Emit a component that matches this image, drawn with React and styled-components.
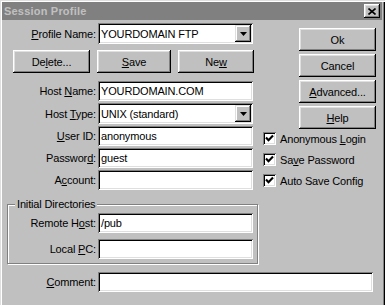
import React from "react";
import styled, { createGlobalStyle } from "styled-components";

const GlobalStyle = createGlobalStyle`
  body {
    margin: 0;
    background: #c0c0c0;
  }
`;

// Outer dialog frame
const Window = styled.div`
  width: 385px;
  height: 305px;
  box-sizing: border-box;
  padding: 2px 3px 0 2px;
  background: #c0c0c0;
  box-shadow: inset 1px 1px #dfdfdf, inset 2px 2px #fff, inset -1px 0 #000,
    inset -2px 0 #808080;
  font-family: "Liberation Sans", Arial, sans-serif;
  font-size: 11px;
  letter-spacing: -0.15px;
  color: #000;
  overflow: hidden;
`;

const TitleBar = styled.div`
  height: 18px;
  background: #808080;
  display: flex;
  align-items: center;
  justify-content: space-between;
  padding: 0 2px;
`;

const Title = styled.span`
  font-weight: bold;
  color: #c0c0c0;
  font-size: 11px;
  letter-spacing: 0.2px;
`;

const CloseButton = styled.div`
  width: 16px;
  height: 14px;
  background: #c0c0c0;
  box-shadow: inset -1px -1px #000, inset 1px 1px #fff, inset -2px -2px #808080,
    inset 2px 2px #dfdfdf;
  display: flex;
  align-items: center;
  justify-content: center;
`;

const Content = styled.div`
  display: flex;
  flex-direction: column;
`;

const TopSection = styled.div`
  display: flex;
`;

const LeftCol = styled.div`
  width: 261px;
  display: flex;
  flex-direction: column;
`;

const RightCol = styled.div`
  display: flex;
  flex-direction: column;
  padding-top: 8px;
`;

const FieldRow = styled.div`
  display: flex;
  align-items: center;
  margin-top: ${(p) => p.$mt || 0}px;
`;

const FieldStack = styled.div`
  display: flex;
  flex-direction: column;
  gap: 2px;
  margin-top: 8px;
`;

const Label = styled.div`
  width: ${(p) => p.$w}px;
  margin-right: 2px;
  text-align: right;
  white-space: nowrap;
`;

const U = styled.span`
  text-decoration: underline;
`;

// Sunken white edit box
const Field = styled.div`
  width: ${(p) => p.$w || 155}px;
  height: ${(p) => p.$h || 20}px;
  box-sizing: border-box;
  background: #fff;
  box-shadow: inset 1px 1px #808080, inset -1px -1px #fff, inset 2px 2px #000,
    inset -2px -2px #dfdfdf;
  display: flex;
  align-items: center;
  padding-left: 3px;
  white-space: nowrap;
  overflow: hidden;
`;

const DropButton = styled.div`
  margin-left: auto;
  margin-right: 2px;
  width: 16px;
  height: 17px;
  background: #c0c0c0;
  box-shadow: inset -1px -1px #000, inset 1px 1px #dfdfdf, inset -2px -2px #808080,
    inset 2px 2px #fff;
  display: flex;
  align-items: center;
  justify-content: center;
  flex-shrink: 0;
`;

const ButtonRow = styled.div`
  display: flex;
  gap: 7px;
  margin-top: 6px;
  padding-left: 11px;
`;

const Button = styled.button`
  width: ${(p) => p.$w || 77}px;
  height: 23px;
  padding: 0;
  border: none;
  background: #c0c0c0;
  font-family: inherit;
  font-size: 11px;
  letter-spacing: -0.15px;
  color: #000;
  box-shadow: inset -1px -1px #000, inset 1px 1px #fff, inset -2px -2px #808080,
    inset 2px 2px #dfdfdf;
`;

const SideButtons = styled.div`
  display: flex;
  flex-direction: column;
  gap: 3px;
  padding-left: 36px;
`;

const CheckList = styled.div`
  display: flex;
  flex-direction: column;
  gap: 2px;
`;

const CheckRow = styled.div`
  height: 19px;
  display: flex;
  align-items: center;
  gap: 4px;
  white-space: nowrap;
`;

const CheckBox = styled.div`
  width: 13px;
  height: 13px;
  box-sizing: border-box;
  background: #fff;
  box-shadow: inset 1px 1px #808080, inset -1px -1px #fff, inset 2px 2px #000,
    inset -2px -2px #dfdfdf;
  display: flex;
  align-items: center;
  justify-content: center;
`;

const GroupBox = styled.div`
  position: relative;
  width: 251px;
  box-sizing: border-box;
  margin: 14px 0 0 5px;
  padding: 8px 0 4px;
  border: 1px solid #808080;
  box-shadow: inset 1px 1px #fff, 1px 1px #fff;
`;

const GroupTitle = styled.div`
  position: absolute;
  top: -7px;
  left: 7px;
  padding: 0 2px;
  line-height: 13px;
  background: #c0c0c0;
`;

const Arrow = () => (
  <svg width="7" height="4" viewBox="0 0 7 4">
    <polygon points="0,0 7,0 3.5,4" fill="#000" />
  </svg>
);

const Check = () => (
  <svg width="9" height="9" viewBox="0 0 9 9">
    <path d="M1 3.5 L3.5 6.2 L8 1.5" stroke="#000" strokeWidth="2.1" fill="none" />
  </svg>
);

const CloseX = () => (
  <svg width="8" height="7" viewBox="0 0 8 7">
    <path d="M0.5 0.5 L7.5 6.5 M7.5 0.5 L0.5 6.5" stroke="#000" strokeWidth="1.6" />
  </svg>
);

const Combo = ({ value }) => (
  <Field $w={155} $h={21}>
    {value}
    <DropButton>
      <Arrow />
    </DropButton>
  </Field>
);

const checks = [
  ["Anonymous ", "L", "ogin"],
  ["Sa", "v", "e Password"],
  ["Auto Save Config", "", ""],
];

export default function App() {
  return (
    <>
      <GlobalStyle />
      <Window>
        <TitleBar>
          <Title>Session Profile</Title>
          <CloseButton>
            <CloseX />
          </CloseButton>
        </TitleBar>
        <Content>
          <TopSection>
            <LeftCol>
              <FieldRow $mt={3}>
                <Label $w={94}>
                  <U>P</U>rofile Name:
                </Label>
                <Combo value="YOURDOMAIN FTP" />
              </FieldRow>
              <ButtonRow>
                <Button $w={77}>
                  De<U>l</U>ete...
                </Button>
                <Button $w={74}>
                  <U>S</U>ave
                </Button>
                <Button $w={76}>
                  Ne<U>w</U>
                </Button>
              </ButtonRow>
              <FieldStack>
                <FieldRow>
                  <Label $w={94}>
                    Host <U>N</U>ame:
                  </Label>
                  <Field $w={155}>YOURDOMAIN.COM</Field>
                </FieldRow>
                <FieldRow>
                  <Label $w={94}>
                    Host <U>T</U>ype:
                  </Label>
                  <Combo value="UNIX (standard)" />
                </FieldRow>
                <FieldRow>
                  <Label $w={94}>
                    <U>U</U>ser ID:
                  </Label>
                  <Field $w={155}>anonymous</Field>
                </FieldRow>
                <FieldRow>
                  <Label $w={94}>
                    Passwor<U>d</U>:
                  </Label>
                  <Field $w={155}>guest</Field>
                </FieldRow>
                <FieldRow>
                  <Label $w={94}>
                    A<U>c</U>count:
                  </Label>
                  <Field $w={155} />
                </FieldRow>
              </FieldStack>
              <GroupBox>
                <GroupTitle>Initial Directories</GroupTitle>
                <FieldRow>
                  <Label $w={88}>
                    Remote H<U>o</U>st:
                  </Label>
                  <Field $w={155}>/pub</Field>
                </FieldRow>
                <FieldRow $mt={6}>
                  <Label $w={88}>
                    Local <U>P</U>C:
                  </Label>
                  <Field $w={155} />
                </FieldRow>
              </GroupBox>
            </LeftCol>
            <RightCol>
              <SideButtons>
                <Button>Ok</Button>
                <Button>Cancel</Button>
                <Button>
                  <U>A</U>dvanced...
                </Button>
                <Button>
                  <U>H</U>elp
                </Button>
              </SideButtons>
              <CheckList>
                {checks.map(([a, u, b]) => (
                  <CheckRow key={a + u + b}>
                    <CheckBox>
                      <Check />
                    </CheckBox>
                    <span>
                      {a}
                      {u && <U>{u}</U>}
                      {b}
                    </span>
                  </CheckRow>
                ))}
              </CheckList>
            </RightCol>
          </TopSection>
          <FieldRow $mt={8}>
            <Label $w={94}>
              <U>C</U>omment:
            </Label>
            <Field $w={275} />
          </FieldRow>
        </Content>
      </Window>
    </>
  );
}
